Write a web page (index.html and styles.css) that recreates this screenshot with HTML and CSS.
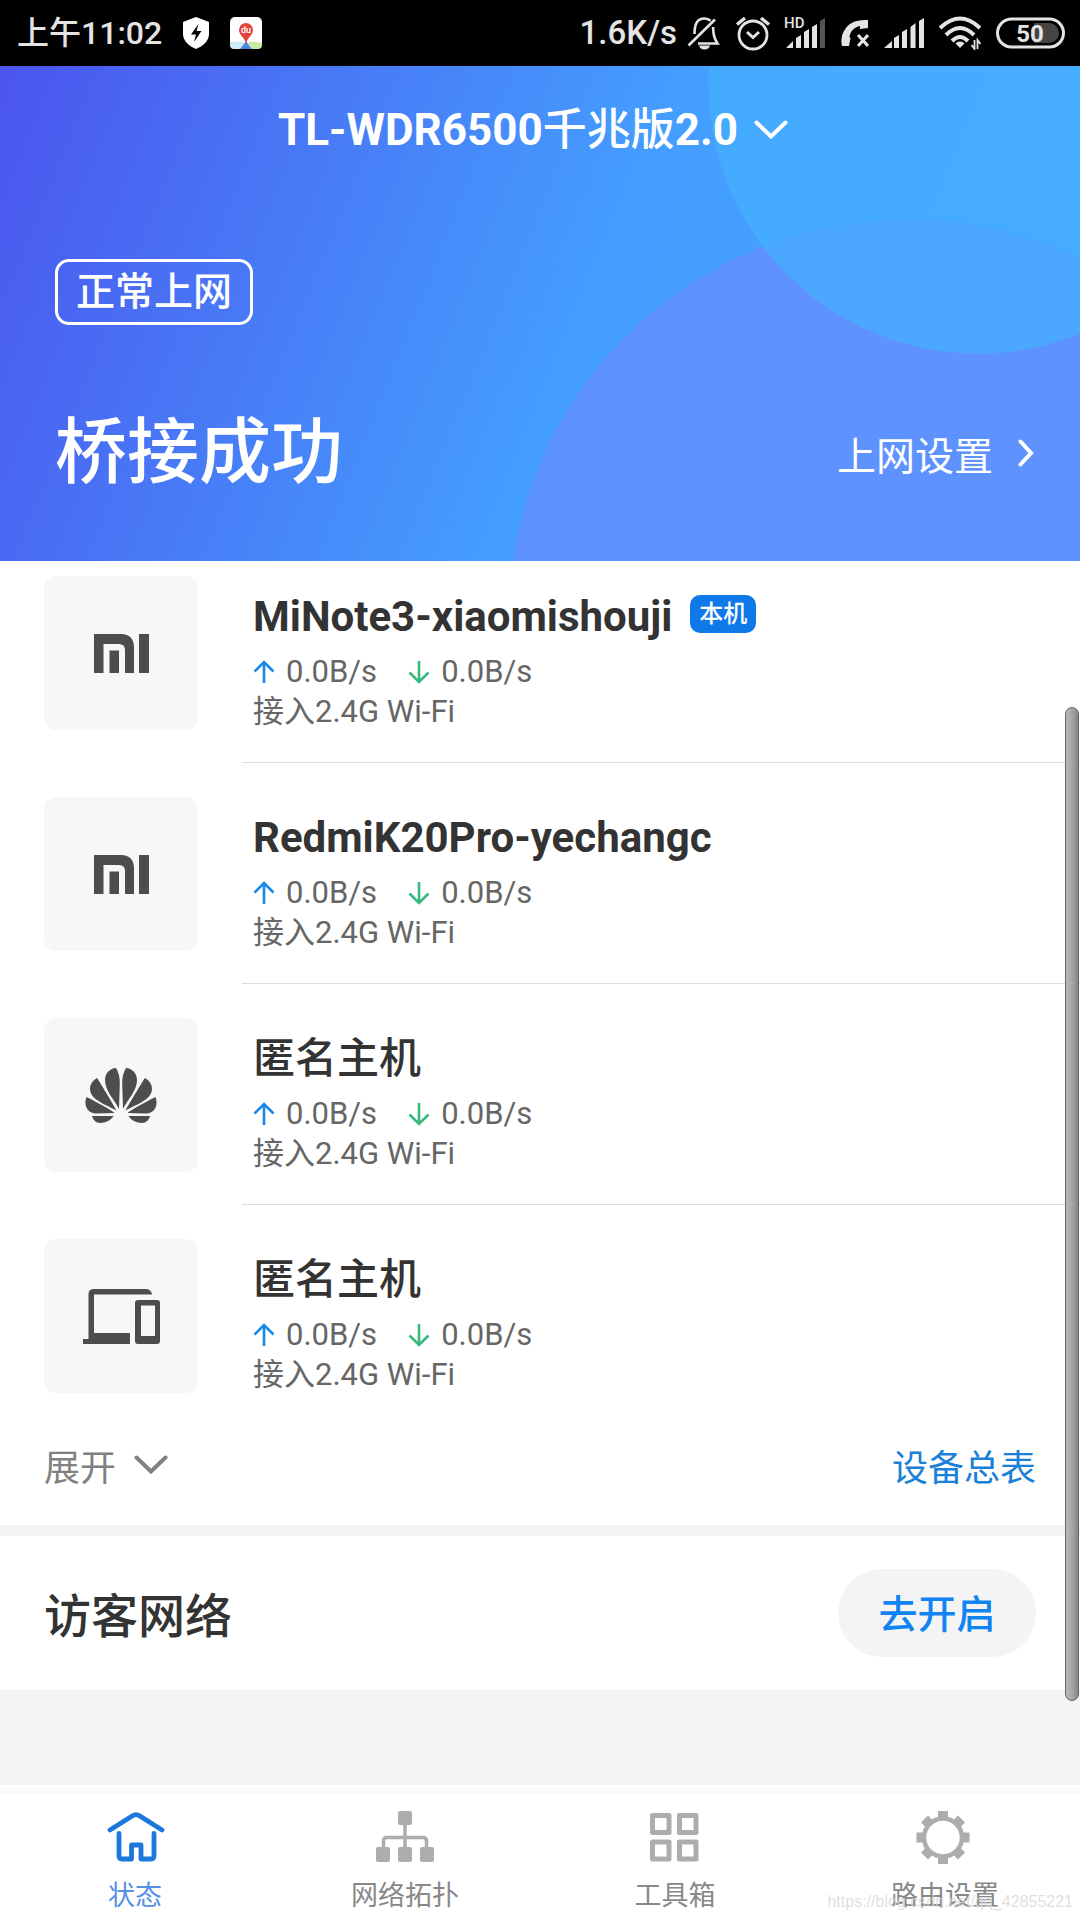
FILE: index.html
```html
<!DOCTYPE html>
<html lang="zh-CN">
<head>
<meta charset="utf-8">
<meta name="viewport" content="width=device-width, initial-scale=1">
<title>TL-WDR6500千兆版2.0</title>
<link rel="stylesheet" href="styles.css">
</head>
<body>
<svg width="0" height="0" class="sprite" aria-hidden="true">
  <symbol id="up" viewBox="0 0 22 24"><path d="M11 23V2M1.500 11.500 11 2l9.500 9.500" fill="none" stroke="#1787ea" stroke-width="2.600"/></symbol>
  <symbol id="down" viewBox="0 0 22 24"><path d="M11 1v21M1.500 12.500 11 22l9.500-9.500" fill="none" stroke="#37b87c" stroke-width="2.600"/></symbol>
  <symbol id="mi" viewBox="0 0 55 39"><path d="M0 0h27q13 0 13 14v25h-9V16q0-6-6-6H9.500v29H0zM15.500 16.500H25V39h-9.500zM45 0h10v39H45z" fill="#4d4d4d"/></symbol>
  <symbol id="chevron" viewBox="0 0 34 20"><path d="M2.500 2.500 17 16.500 31.500 2.500" fill="none" stroke="currentColor" stroke-width="4" stroke-linecap="round"/></symbol>
</svg>

<div class="status-bar">
  <div class="status-side">
    <span class="clock">上午11:02</span>
    <svg class="shield" width="28" height="32" viewBox="0 0 28 32"><path d="M14 0l13 5v12c0 7-6 12-13 15C7 29 1 24 1 17V5z" fill="#fff"/><path d="M16.500 7 9 17.500h5L12 25l7.500-11h-5z" fill="#000"/></svg>
    <svg width="32" height="32" viewBox="0 0 32 32"><rect width="32" height="32" rx="5" fill="#fff"/><path d="M0 25q9-1 14 0l-4 7H4q-4 0-4-4z" fill="#cfeaf8"/><path d="M18 25q8-1 14 1v2q0 4-4 4h-6z" fill="#c5eaa0"/><path d="M16 24l6 8H10z" fill="#4e8ae0"/><path d="M16 26c-2-6-7-8-7-13a7 7 0 0 1 14 0c0 5-5 7-7 13z" fill="#e2453c"/><text x="16" y="16" text-anchor="middle" class="pin-text">du</text></svg>
  </div>
  <div class="status-side">
    <span class="rate">1.6K/s</span>
    <svg class="bell" width="34" height="34" viewBox="0 0 34 34" fill="none" stroke="#e4e4e4" stroke-width="2.600"><path d="M7.500 18c0-9 2-15.500 10-15.500 2.500 0 4.500.800 6 2.200M26 11c.500 8 1 11 4.500 16.500H11"/><path d="M1.500 29.500 28 3.500"/><path d="M12 29.500h11q-1 4-5.500 4t-5.500-4z" fill="#e4e4e4" stroke="none"/></svg>
    <svg class="alarm" width="36" height="36" viewBox="0 0 36 36" fill="none" stroke="#e4e4e4" stroke-width="2.800"><circle cx="18" cy="20" r="14"/><path d="M12 17l6 5.500 6-5.500" stroke-width="3"/><path d="M2 9.500 10 3M34 9.500 26 3" stroke-width="3.400"/></svg>
    <svg class="hd" width="42" height="40" viewBox="0 -4 42 40" fill="#e4e4e4"><text x="0" y="11" class="hd-text">HD</text><path d="M2 31 9 24v7zM12 21l5-3v13h-5zM20 15l5-3v19h-5zM28 10l5-3v24h-5z"/><path d="M36 4l5-3v30h-5z" fill="#555"/></svg>
    <svg class="call" width="28" height="28" viewBox="0 0 28 28"><path d="M27 1v8l-8 1v-3C13 8 9 13 8.500 18l1 1-1.500 8H1q-2-9 2-15Q9 0 27 1z" fill="#e4e4e4"/><path d="M17 16l10 11M27 16 17 27" stroke="#e4e4e4" stroke-width="3"/></svg>
    <svg class="signal" width="40" height="30" viewBox="0 0 40 30" fill="#e4e4e4"><path d="M0 30l8-7v7zM10 20l5-3v13h-5zM18 14l5-3v19h-5zM26.500 9l5-4v25h-5zM35 3l5-3v30h-5z"/></svg>
    <svg class="wifi" width="42" height="34" viewBox="0 0 42 34" fill="none" stroke="#e4e4e4"><path d="M1 12q20-19 40 0M7 19q14-14 28 0M13 25q8-8 16 0" stroke-width="4"/><path d="M21 25.500q3 0 4.500 2L21 32l-4.500-4.500q1.500-2 4.500-2z" fill="#e4e4e4" stroke="none"/><path d="M35.500 24v9l-3-4M38.500 33v-9l3 4" stroke-width="1.800"/></svg>
    <svg width="69" height="32" viewBox="0 0 69 32"><rect x="1.500" y="2" width="66" height="28" rx="14" fill="none" stroke="#e4e4e4" stroke-width="3"/><path d="M38 6h15a10 10 0 0 1 0 20H38z" fill="#454545"/><text x="34" y="25" text-anchor="middle" class="battery-text">50</text></svg>
  </div>
</div>

<header class="hero">
  <div class="hero-title">
    <h1 class="router"><button class="router-switch" type="button"><span>TL-WDR6500<span class="han">千兆版</span>2.0</span><svg width="34" height="20"><use href="#chevron"/></svg></button></h1>
  </div>
  <span class="net-badge">正常上网</span>
  <div class="hero-row">
    <p class="bridge">桥接成功</p>
    <a class="net-link" href="#net">上网设置<svg width="18" height="28" viewBox="0 0 18 28"><path d="M3.500 2.500 14 14 3.500 25.500" fill="none" stroke="#fff" stroke-width="4" stroke-linecap="round"/></svg></a>
  </div>
</header>

<main class="content">
  <section class="devices">
    <ul class="device-list">
      <li class="device">
        <div class="device-icon"><svg width="55" height="39"><use href="#mi"/></svg></div>
        <div class="device-body">
          <h2 class="name">MiNote3-xiaomishouji<span class="self">本机</span></h2>
          <p class="speed"><svg width="22" height="24"><use href="#up"/></svg><span class="value">0.0B/s</span><svg width="22" height="24"><use href="#down"/></svg><span class="value">0.0B/s</span></p>
          <p class="link-type">接入2.4G Wi-Fi</p>
        </div>
      </li>
      <li class="device">
        <div class="device-icon"><svg width="55" height="39"><use href="#mi"/></svg></div>
        <div class="device-body">
          <h2 class="name">RedmiK20Pro-yechangc</h2>
          <p class="speed"><svg width="22" height="24"><use href="#up"/></svg><span class="value">0.0B/s</span><svg width="22" height="24"><use href="#down"/></svg><span class="value">0.0B/s</span></p>
          <p class="link-type">接入2.4G Wi-Fi</p>
        </div>
      </li>
      <li class="device">
        <div class="device-icon"><svg width="72" height="55" viewBox="0 0 72 55" fill="#4d4d4d"><g id="petals"><path d="M34 41C29 31 20 23 20 12 20 5 25 .500 31 0c3 5 4 10 3.800 16z"/><path d="M31.500 42.500C22 37 5 32 5 21c0-5 3-8.500 7-11 1 1 19 31 19.500 32.500z"/><path d="M1.500 29C-1.500 37 2 45.500 11 45.500l18.500-.500C28 43 6 31 1.500 29z"/><path d="M7 48h21.500C26 52 21 55 15 55c-4 0-7-3-8-7z"/></g><use href="#petals" transform="matrix(-1 0 0 1 72 0)"/></svg></div>
        <div class="device-body">
          <h2 class="name han">匿名主机</h2>
          <p class="speed"><svg width="22" height="24"><use href="#up"/></svg><span class="value">0.0B/s</span><svg width="22" height="24"><use href="#down"/></svg><span class="value">0.0B/s</span></p>
          <p class="link-type">接入2.4G Wi-Fi</p>
        </div>
      </li>
      <li class="device">
        <div class="device-icon"><svg width="77" height="55" viewBox="0 0 77 55" fill="#4d4d4d"><path d="M5.500 50V5q0-5 5.500-5h52q5 0 6 5.500H11V44h36v11H0v-5z"/><path fill-rule="evenodd" d="M55 11h19q3 0 3 3v38q0 3-3 3H55q-3 0-3-3V14q0-3 3-3zm3 5.500V47h14V16.500z"/></svg></div>
        <div class="device-body">
          <h2 class="name han">匿名主机</h2>
          <p class="speed"><svg width="22" height="24"><use href="#up"/></svg><span class="value">0.0B/s</span><svg width="22" height="24"><use href="#down"/></svg><span class="value">0.0B/s</span></p>
          <p class="link-type">接入2.4G Wi-Fi</p>
        </div>
      </li>
    </ul>
    <div class="list-actions">
      <button class="expand" type="button">展开<svg width="34" height="20"><use href="#chevron"/></svg></button>
      <a class="all-devices" href="#devices">设备总表</a>
    </div>
  </section>
  <section class="guest">
    <h2 class="guest-title">访客网络</h2>
    <button class="enable" type="button">去开启</button>
  </section>
  <div class="scroll-thumb"></div>
</main>

<nav class="tabs">
  <a class="tab active" href="#status"><svg width="60" height="60" viewBox="0 0 60 60" fill="none" stroke="#1d78dc" stroke-width="4.800" stroke-linecap="round" stroke-linejoin="round"><path d="M5 23 27.500 8.800Q31 6.500 34.500 8.800L57 23M14 26.500V49q0 3 3 3h9.500V38H36v14h10q3 0 3-3V26.500"/></svg>状态</a>
  <a class="tab" href="#topology"><svg width="60" height="60" viewBox="0 0 60 60" fill="#adadad"><path d="M30 16v26M8.500 42v-8q0-3.500 3.500-3.500h36q3.500 0 3.500 3.500v8" fill="none" stroke="#adadad" stroke-width="3.500"/><rect x="23" y="4" width="14" height="14" rx="2"/><rect x="1" y="40" width="14" height="15" rx="2"/><rect x="23" y="40" width="14" height="15" rx="2"/><rect x="45" y="40" width="14" height="15" rx="2"/></svg>网络拓扑</a>
  <a class="tab" href="#tools"><svg width="60" height="60" viewBox="0 0 60 60" fill="none" stroke="#adadad" stroke-width="5" stroke-linejoin="round"><path d="M7.500 8.500H24v17H7.500zM34.500 8.500H51v17H34.500zM7.500 35H24v17H7.500zM34.500 35H51v17H34.500z"/></svg>工具箱</a>
  <a class="tab" href="#settings"><svg width="60" height="60" viewBox="0 0 60 60" fill="none" stroke="#adadad"><circle cx="28" cy="30.500" r="19" stroke-width="4.500"/><path stroke-width="10" d="M28 12.500V4M28 48.500V57M10 30.500H1.500M46 30.500h8.500M40.500 18l6-6M15.500 18l-6-6M40.500 43l6 6M15.500 43l-6 6"/></svg>路由设置</a>
  <span class="watermark">https://blog.csdn.net/qq_42855221</span>
</nav>
</body>
</html>
```
FILE: styles.css
```css
* {
  box-sizing: border-box;
}

body {
  display: flex;
  flex-direction: column;
  min-height: 100vh;
  margin: 0;
  background: #f4f4f4;
  color: #333;
  font-family: Roboto, "Noto Sans CJK SC", sans-serif;
}

h1, h2, p, ul {
  margin: 0;
  padding: 0;
}

button {
  border: 0;
  padding: 0;
  background: none;
  color: inherit;
  font: inherit;
}

a {
  color: inherit;
  text-decoration: none;
}

svg {
  flex: none;
}

.sprite {
  position: absolute;
}

/* status bar */
.status-bar {
  display: flex;
  justify-content: space-between;
  height: 66px;
  padding: 0 15px 0 17px;
  background: #000;
  color: #e4e4e4;
  font-size: 33px;
  font-weight: 500;
  line-height: 66px;
}

.status-side {
  display: flex;
  align-items: center;
}

.clock {
  font-size: 32px;
}

.shield {
  margin: 0 20px;
}

.rate {
  margin-right: 10px;
}

.bell {
  margin-right: 14px;
}

.alarm {
  margin-right: 13px;
}

.hd,
.call,
.signal,
.wifi {
  margin-right: 15px;
}

.pin-text {
  fill: #fff;
  font-size: 9px;
}

.hd-text {
  font-size: 15px;
}

.battery-text {
  fill: #e4e4e4;
  font-size: 24px;
  font-weight: 700;
}

/* gradient header */
.hero {
  display: flex;
  flex-direction: column;
  align-items: flex-start;
  height: 495px;
  padding: 0 45px 0 55px;
  background:
    radial-gradient(circle 270px at calc(100% - 102px) 18px, rgba(68, 176, 255, 0.7) 269px, transparent 270px),
    radial-gradient(circle 400px at calc(100% - 172px) 553px, #5e92ff 399px, transparent 400px),
    linear-gradient(112deg, #4b55ee 0%, #487bf6 28%, #449eff 54%, #4ba3ff 100%);
  color: #fff;
}

.hero-title {
  align-self: center;
  padding: 32px 24px 0 0;
}

.router {
  font-size: 44px;
  font-weight: 700;
  line-height: 64px;
}

.router-switch {
  display: flex;
  align-items: center;
  gap: 16px;
}

.han {
  font-weight: 500;
}

.net-badge {
  margin-top: 97px;
  padding: 0 18px;
  border: 3px solid #fff;
  border-radius: 14px;
  font-size: 39px;
  font-weight: 500;
  line-height: 60px;
}

.hero-row {
  display: flex;
  align-items: center;
  justify-content: space-between;
  width: 100%;
  margin-top: 76px;
}

.bridge {
  font-size: 72px;
  font-weight: 500;
  line-height: 104px;
}

.net-link {
  display: flex;
  align-items: center;
  gap: 24px;
  font-size: 39px;
}

/* page content */
.content {
  position: relative;
  display: flex;
  flex: 1;
  flex-direction: column;
  gap: 11px;
}

.devices {
  padding-top: 15px;
  background: #fff;
}

.device-list {
  display: grid;
  gap: 34px;
  list-style: none;
}

.device {
  display: flex;
  align-items: flex-start;
  gap: 44px;
  padding-left: 44px;
}

.device-icon {
  display: flex;
  align-items: center;
  justify-content: center;
  width: 154px;
  height: 154px;
  border-radius: 12px;
  background: #f7f7f7;
}

.device-body {
  flex: 1;
  height: 187px;
  padding: 14px 0 0 11px;
  border-bottom: 1px solid #ddd;
}

.device:last-child .device-body {
  border-bottom: 0;
}

.name {
  display: flex;
  align-items: center;
  gap: 18px;
  margin-bottom: 8px;
  font-size: 42px;
  line-height: 54px;
}

.self {
  height: 38px;
  margin-bottom: 6px;
  padding: 0 9px;
  border-radius: 10px;
  background: #1079ea;
  color: #fff;
  font-size: 24px;
  font-weight: 500;
  line-height: 38px;
}

.speed {
  display: flex;
  align-items: center;
  gap: 11px;
  color: #666;
  font-size: 31px;
  line-height: 40px;
}

.value {
  margin-right: 20px;
}

.link-type {
  color: #666;
  font-size: 31px;
  line-height: 40px;
}

.list-actions {
  display: flex;
  align-items: center;
  justify-content: space-between;
  height: 99px;
  padding: 0 44px 22px;
  font-size: 36px;
}

.expand {
  display: flex;
  align-items: center;
  gap: 18px;
  color: #808080;
}

.all-devices {
  color: #1a80d8;
}

.guest {
  display: flex;
  align-items: center;
  justify-content: space-between;
  height: 154px;
  padding: 0 44px;
  background: #fff;
}

.guest-title {
  padding-bottom: 2px;
  font-size: 47px;
  font-weight: 500;
}

.enable {
  width: 198px;
  height: 88px;
  padding-bottom: 4px;
  border-radius: 44px;
  background: #f4f4f4;
  color: #0f84f2;
  font-size: 39px;
  font-weight: 500;
}

.scroll-thumb {
  position: absolute;
  top: 146px;
  right: 1px;
  width: 14px;
  height: 994px;
  border: 1px solid #666;
  border-radius: 7px;
  background: linear-gradient(90deg, #b8b8b8, #a6a6a6 50%, #858585);
}

/* bottom tabs */
.tabs {
  position: relative;
  display: grid;
  grid-template-columns: repeat(4, 1fr);
  height: 135px;
  padding-top: 22px;
  background: linear-gradient(#fff 0, #fff 3px, #f8f8f8 8px, #fff 9px);
}

.tab {
  display: flex;
  flex-direction: column;
  align-items: center;
  gap: 13px;
  color: #888;
  font-size: 27px;
  line-height: 32px;
}

.tab.active {
  color: #5790e6;
}

.watermark {
  position: absolute;
  right: 7px;
  bottom: 8px;
  color: rgba(215, 215, 215, 0.8);
  font-family: "Liberation Sans", sans-serif;
  font-size: 16px;
  line-height: 20px;
}
```
